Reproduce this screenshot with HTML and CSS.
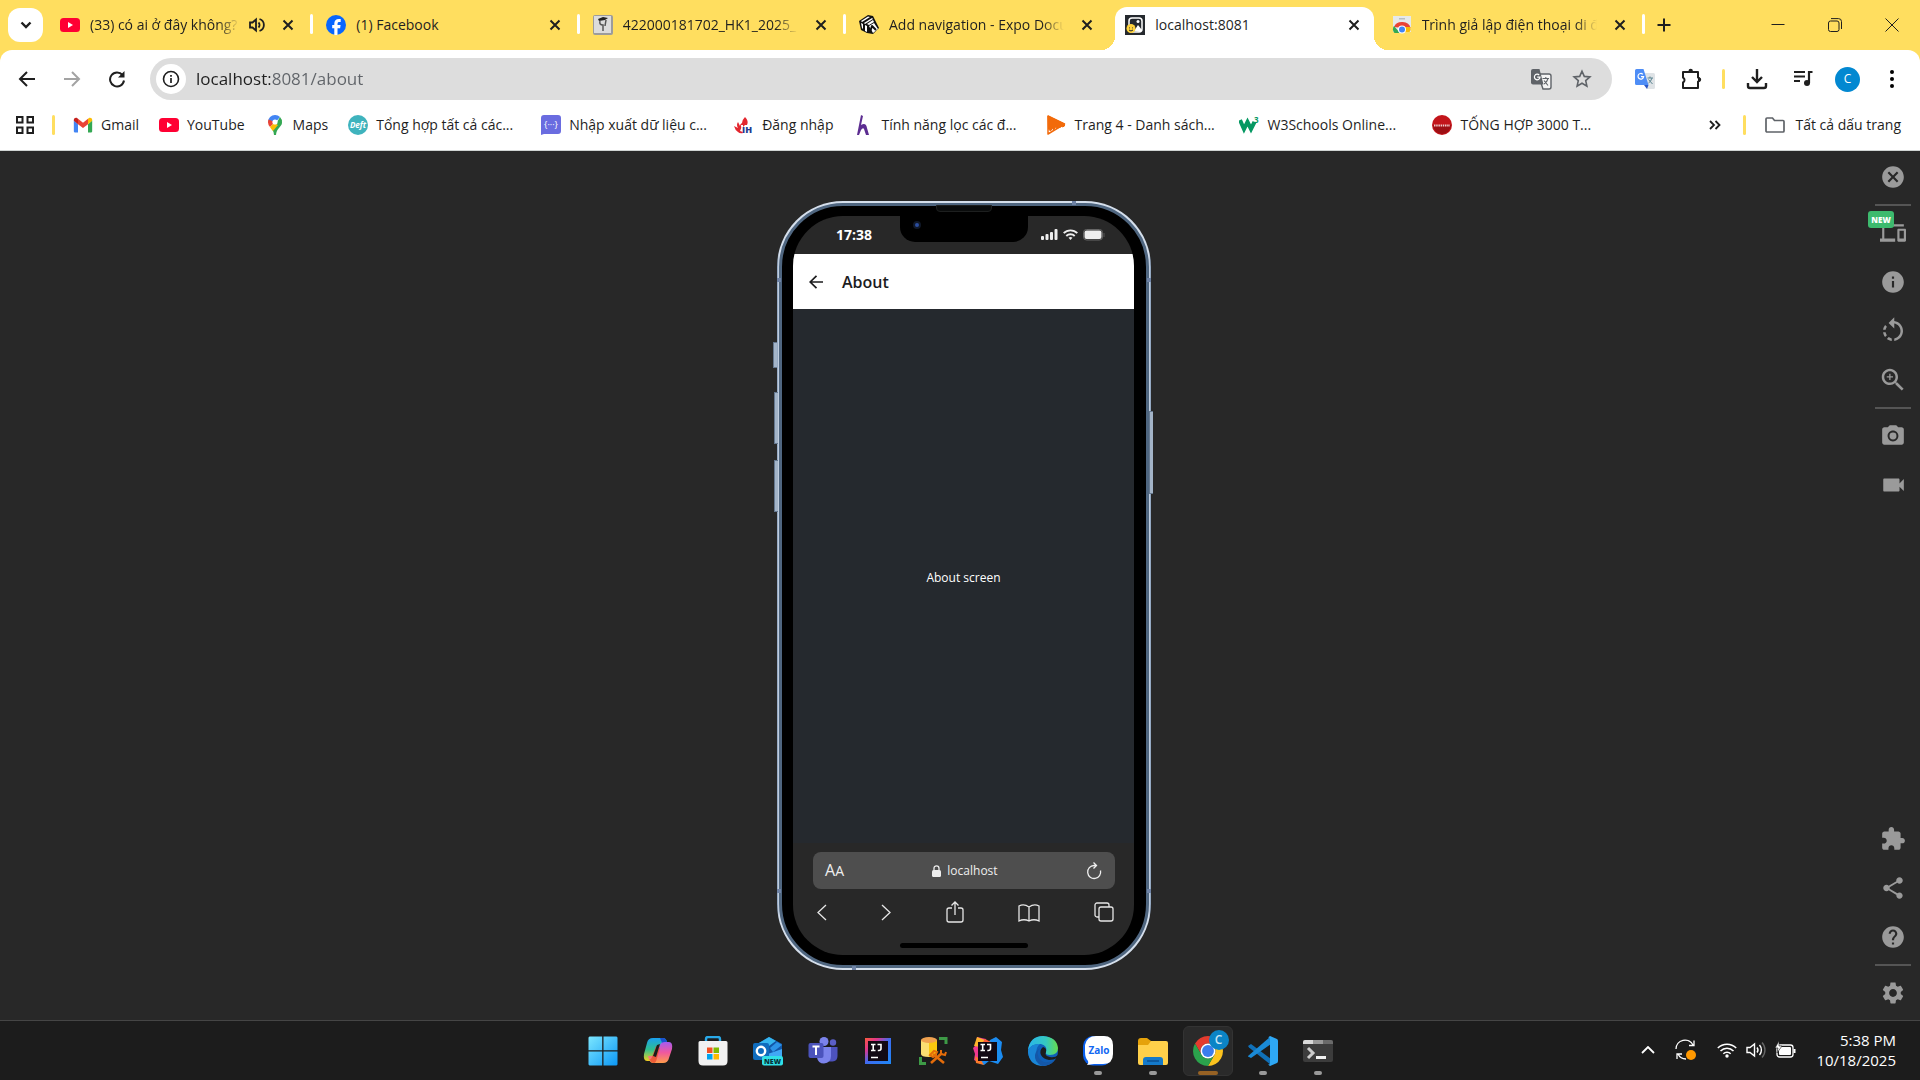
FILE: index.html
```html
<!DOCTYPE html>
<html lang="vi">
<head>
<meta charset="utf-8">
<meta name="viewport" content="width=device-width, initial-scale=1">
<title>localhost:8081</title>
<link rel="stylesheet" href="styles.css">
</head>
<body>
<header class="browser">
  <div class="tab-strip">
    <button class="tab-search" aria-label="Tìm kiếm thẻ"><svg width="12" height="12" viewBox="0 0 12 12"><path d="M1.500 3.500 6 8l4.500-4.500" fill="none" stroke="#1f1f1f" stroke-width="2.400"/></svg></button>
    <ul class="tabs">
      <li class="tab"><div class="tab-body">
        <svg class="favicon" viewBox="0 0 20 20"><rect y="3" width="20" height="14" rx="3.500" fill="#ff0033"/><path d="m8 7 5 3-5 3z" fill="#fff"/></svg>
        <span class="tab-title fade">(33) có ai ở đây không? - YouTube</span>
        <svg class="audio" width="16" height="16" viewBox="0 0 16 16" fill="none" stroke="#1f1f1f" stroke-width="1.800"><path d="M1 5.500h2.500L7 2.500v11L3.500 10.500H1z"/><path d="M9.500 5.500a3.500 3.500 0 0 1 0 5M10.500 2a6.300 6.300 0 0 1 0 12"/></svg>
        <button class="tab-close" aria-label="Đóng"><svg viewBox="0 0 12 12"><path d="m1.500 1.500 9 9m0-9-9 9"/></svg></button>
      </div></li>
      <li class="tab"><div class="tab-body">
        <svg class="favicon" viewBox="0 0 20 20"><circle cx="10" cy="10" r="10" fill="#0866ff"/><path d="M8.300 20v-6.800H6.200V10h2.100V8.700c0-3.300 1.500-4.800 4.700-4.800.6 0 1.300.1 1.700.2V7h-1.200c-1.500 0-2 .6-2 2.100V10h3.100l-.5 3.200h-2.600V20z" fill="#fff"/></svg>
        <span class="tab-title">(1) Facebook</span>
        <button class="tab-close" aria-label="Đóng"><svg viewBox="0 0 12 12"><path d="m1.500 1.500 9 9m0-9-9 9"/></svg></button>
      </div></li>
      <li class="tab"><div class="tab-body">
        <svg class="favicon" viewBox="0 0 20 20"><rect width="20" height="20" rx="2" fill="#9c9c9c"/><rect x="1" y="1" width="17" height="17" fill="#dcdcdc"/><path d="m5 4 5-2 5 1-3 2-6 1z" fill="#222"/><path d="M7 6q-1 4 3 4v6M13 5l-1 6" fill="none" stroke="#555" stroke-width="1.500"/></svg>
        <span class="tab-title fade">422000181702_HK1_2025_ - Google</span>
        <button class="tab-close" aria-label="Đóng"><svg viewBox="0 0 12 12"><path d="m1.500 1.500 9 9m0-9-9 9"/></svg></button>
      </div></li>
      <li class="tab"><div class="tab-body">
        <svg class="favicon" viewBox="0 0 20 20" stroke-linejoin="round"><path d="m0 6 9-6 5 1 2 4 4 8-6 6-6-1-6-3z" fill="#111"/><path d="m2 6 7-4.500L11 2 3 7zM5 8l8-5 1 1-8 5zM8 9l6-4 1 2-5 3z" fill="#fff"/><path d="m2 8 1 5 1 1V9zM6 10v6l2 1V11z" fill="#fff"/><path d="m10 11 5-3 4 6-5 4z" fill="#fff"/><path d="m11 17 2-6 4 4" fill="none" stroke="#111" stroke-width="2"/></svg>
        <span class="tab-title fade">Add navigation - Expo Documentation</span>
        <button class="tab-close" aria-label="Đóng"><svg viewBox="0 0 12 12"><path d="m1.500 1.500 9 9m0-9-9 9"/></svg></button>
      </div></li>
      <li class="tab active"><div class="tab-body">
        <svg class="favicon" viewBox="0 0 20 20"><rect width="20" height="20" fill="#25292e"/><rect x="4" y="3" width="13" height="14" rx="3" fill="#25292e" stroke="#fff" stroke-width="1.500"/><circle cx="13" cy="6.500" r="1.500" fill="#fff"/><path d="m9 16 4-6 4 5-2 2z" fill="#fff"/><circle cx="6" cy="13.500" r="4.500" fill="#ffd33d"/><path d="M4.500 12.500v.8m3-.8v.8M4 15q2 2 4 0" stroke="#25292e" fill="none"/></svg>
        <span class="tab-title">localhost:8081</span>
        <button class="tab-close" aria-label="Đóng"><svg viewBox="0 0 12 12"><path d="m1.500 1.500 9 9m0-9-9 9"/></svg></button>
      </div></li>
      <li class="tab"><div class="tab-body">
        <svg class="favicon" viewBox="0 0 20 20"><path d="M1 1h18v16H1z" fill="#e6e9ea"/><path d="M7 3h6v1.500H7z" fill="#b8bec2"/><path d="M2 12A8.500 7 0 0 1 18.500 13H10z" fill="#ea4335"/><path d="M2 11 8 18H2.500a9 7 0 0 1-.5-7z" fill="#34a853"/><path d="M10 12h8.500q.8 3-1 5h-6z" fill="#fbbc04"/><circle cx="10" cy="14.500" r="4" fill="#fff"/><circle cx="10" cy="14.500" r="3" fill="#4285f4"/></svg>
        <span class="tab-title fade">Trình giả lập điện thoại di động</span>
        <button class="tab-close" aria-label="Đóng"><svg viewBox="0 0 12 12"><path d="m1.500 1.500 9 9m0-9-9 9"/></svg></button>
      </div></li>
    </ul>
    <button class="new-tab" aria-label="Thẻ mới"><svg width="14" height="14" viewBox="0 0 14 14"><path d="M7 .5v13M.5 7h13" stroke="#1f1f1f" stroke-width="2"/></svg></button>
    <div class="window-controls">
      <button aria-label="Thu nhỏ"><svg width="14" height="14" viewBox="0 0 14 14"><path d="M.5 6.500h13"/></svg></button>
      <button aria-label="Khôi phục"><svg width="14" height="14" viewBox="0 0 14 14"><rect x=".5" y="3" width="10.500" height="10.500" rx="2"/><path d="M3 .6h7.500a3 3 0 0 1 3 3V11"/></svg></button>
      <button aria-label="Đóng cửa sổ"><svg width="14" height="14" viewBox="0 0 14 14"><path d="m.5.5 13 13m0-13-13 13"/></svg></button>
    </div>
  </div>

  <div class="chrome-body">
    <div class="toolbar">
      <div class="nav-buttons">
        <button aria-label="Quay lại"><svg width="18" height="18" viewBox="0 0 18 18"><path d="M17 9H2M9 2 2 9l7 7" fill="none" stroke="#1f1f1f" stroke-width="2"/></svg></button>
        <button aria-label="Tiến"><svg width="18" height="18" viewBox="0 0 18 18"><path d="M1 9h15M9 2l7 7-7 7" fill="none" stroke="#a3a3a3" stroke-width="2"/></svg></button>
        <button aria-label="Tải lại"><svg width="18" height="18" viewBox="0 0 18 18"><path d="M14.500 5A7 7 0 1 0 16 10.500" fill="none" stroke="#1f1f1f" stroke-width="2"/><path d="M16.500 1v6.500H10z" fill="#1f1f1f"/></svg></button>
      </div>
      <div class="omnibox">
        <button class="site-info" aria-label="Thông tin trang web"><svg width="18" height="18" viewBox="0 0 18 18"><circle cx="9" cy="9" r="7.500" fill="none" stroke="#1f1f1f" stroke-width="1.600"/><path d="M9 8v5M9 5v1.700" stroke="#1f1f1f" stroke-width="1.700"/></svg></button>
        <input class="address" type="text" aria-label="Thanh địa chỉ" value="localhost:8081/about">
        <button aria-label="Dịch trang này"><svg width="22" height="22" viewBox="0 0 22 22"><path d="M8 6h11a2 2 0 0 1 2 2v11a2 2 0 0 1-2 2h-6z" fill="#f5f5f5" stroke="#5f6368" stroke-width="1.400"/><path d="M3 1h6.500l4 15.500H3a2 2 0 0 1-2-2V3a2 2 0 0 1 2-2z" fill="#5f6368"/><path d="M9.200 7A2.800 2.800 0 1 0 10 9.200H7.200" fill="none" stroke="#fff" stroke-width="1.200"/><path d="M12.500 10.500H19M15.800 9v1.500M18 10.500q-1 4-4 5.500M14 12.500l4 5" fill="none" stroke="#5f6368" stroke-width="1.100"/></svg></button>
        <button aria-label="Đánh dấu thẻ này"><svg width="20" height="20" viewBox="0 0 20 20"><path d="m10 2.200 2.300 5.200 5.600.5-4.200 3.700 1.200 5.500-4.900-2.900-4.900 2.900 1.200-5.500-4.200-3.700 5.600-.5z" fill="none" stroke="#5f6368" stroke-width="1.600"/></svg></button>
      </div>
      <div class="actions">
        <button aria-label="Google Dịch"><svg width="20" height="20" viewBox="0 0 20 20"><path d="M8 4h10.500A1.500 1.500 0 0 1 20 5.500v13a1.500 1.500 0 0 1-1.500 1.500H12z" fill="#dfe3e6"/><path d="M1.500 0h7l5 16h-12A1.500 1.500 0 0 1 0 14.500v-13A1.500 1.500 0 0 1 1.500 0z" fill="#4e8df6"/><path d="m9 16h4.500L12 20z" fill="#2a56c6"/><path d="M7.800 5.300A2.800 2.800 0 1 0 8.600 7.600H6" fill="none" stroke="#fff" stroke-width="1.200"/><path d="M12.500 9H18M15 7.500V9m2 0q-1 3.500-3.500 5M13.500 10.500l4 4.500" fill="none" stroke="#5c8592"/></svg></button>
        <button aria-label="Tiện ích"><svg width="22" height="22" viewBox="0 0 22 22"><path d="M3 4h15v5.500a2.200 2.200 0 0 1 0 4.200V20H3v-5.500a2.800 2.800 0 0 0 0-5z" fill="none" stroke="#1f1f1f" stroke-width="2" stroke-linejoin="round"/><path d="M8.500 4V3a2.200 2.200 0 0 1 4.400 0v1M18 9.400h1a2.200 2.200 0 0 1 0 4.400h-1z" fill="#1f1f1f"/></svg></button>
        <span class="bar-divider"></span>
        <button aria-label="Tệp đã tải xuống"><svg width="22" height="22" viewBox="0 0 22 22"><path d="M11 1v13M6 9l5 5 5-5M2 15v3a2 2 0 0 0 2 2h14a2 2 0 0 0 2-2v-3" fill="none" stroke="#1f1f1f" stroke-width="2.400"/></svg></button>
        <button aria-label="Điều khiển nội dung nghe nhìn"><svg width="20" height="18" viewBox="0 0 20 18"><path d="M1 2h11M1 6.500h11M1 11h6" stroke="#1f1f1f" stroke-width="2"/><path d="M16 13V2h3.500" stroke="#1f1f1f" stroke-width="2.200" fill="none"/><circle cx="14" cy="13" r="3" fill="#1f1f1f"/></svg></button>
        <button class="avatar" aria-label="Hồ sơ">C</button>
        <button aria-label="Menu"><svg width="4" height="18" viewBox="0 0 4 18"><circle cx="2" cy="2" r="2"/><circle cx="2" cy="9" r="2"/><circle cx="2" cy="16" r="2"/></svg></button>
      </div>
    </div>

    <nav class="bookmarks">
      <button class="apps" aria-label="Nhóm thẻ"><svg width="18" height="18" viewBox="0 0 18 18" fill="none" stroke="#1f1f1f" stroke-width="2"><path d="M1 1h5.500v5.500H1zM11.500 1H17v5.500h-5.500zM1 11.500h5.500V17H1zM11.500 11.500H17V17h-5.500z"/></svg></button>
      <span class="bar-divider"></span>
      <div class="bookmark-list">
        <a href="#"><svg viewBox="0 0 24 24"><path d="M1 6.500v13c0 .8.600 1.500 1.500 1.500H6V11z" fill="#4285f4"/><path d="M23 6.500v13c0 .8-.6 1.500-1.500 1.500H18V11z" fill="#34a853"/><path d="M6 11V4.500l6 4.700 6-4.700V11l-6 4.700z" fill="#ea4335"/><path d="M1 7V6c0-2.500 2.500-3.500 4.200-2.200L6 4.500V11z" fill="#c5221f"/><path d="M23 7V6c0-2.500-2.500-3.500-4.200-2.200L18 4.500V11z" fill="#fbbc04"/></svg><span>Gmail</span></a>
        <a href="#"><svg viewBox="0 0 20 20"><rect y="3" width="20" height="14" rx="3.500" fill="#ff0033"/><path d="m8 7 5 3-5 3z" fill="#fff"/></svg><span>YouTube</span></a>
        <a href="#"><svg viewBox="0 0 20 20"><path d="M3 7a7 7 0 0 1 7-7v7z" fill="#4285f4"/><path d="M3.500 4.500 10 7l-5 5Q3 9.500 3 7.500 3 6 3.500 4.500z" fill="#ea4335"/><path d="M10 0a7 7 0 0 1 5 2L9 9z" fill="#4285f4"/><path d="M15 2q2.500 2.500 2 6c-.5 4-5.500 5-6 12H9q0-3-1.500-5z" fill="#34a853"/><path d="m5 12 4-4 4 2-5 6q-2-2-3-4z" fill="#fbbc04"/><circle cx="10" cy="7" r="2.600" fill="#fff"/></svg><span>Maps</span></a>
        <a href="#" class="long"><svg viewBox="0 0 20 20"><circle cx="10" cy="10" r="10" fill="#3fb3bd"/><text x="10" y="13" text-anchor="middle" font-size="8" font-weight="700" font-style="italic" fill="#fff">Deft</text></svg><span>Tổng hợp tất cả các...</span></a>
        <a href="#" class="long"><svg viewBox="0 0 20 20"><path d="M3 0h14a3 3 0 0 1 3 3v13a3 3 0 0 1-3 3H3l-3 1V3a3 3 0 0 1 3-3z" fill="#6a6ce0"/><text x="10" y="13" text-anchor="middle" font-size="9" fill="#fff">{···}</text></svg><span>Nhập xuất dữ liệu c...</span></a>
        <a href="#"><svg viewBox="0 0 20 20"><path d="M11 2q4 4 2 8h-2l-3 3 1 5q-3 1-5-1Q1 15 0 11l4 2q-2-3 0-6l2 4q0-2 2-3 0-3 3-6z" fill="#e3262e"/><path d="M7 10q1 3-1 6l3 1V10z" fill="#fff"/><text x="8" y="18" font-size="9" font-weight="800" fill="#253a8e">IH</text></svg><span>Đăng nhập</span></a>
        <a href="#" class="long"><svg viewBox="0 0 20 20"><path d="m8 0 2 1-2 9q5-3 6 3l2 7h-3l-2-6q-1-2-3 1l-2 5H4z" fill="#5c2d91"/></svg><span>Tính năng lọc các đ...</span></a>
        <a href="#" class="long"><svg viewBox="0 0 20 20"><path d="M2 1 18.500 9 2 19z" fill="#fff" stroke="#f26a0a" stroke-width="1.500" stroke-linejoin="round"/><path d="M2 1 18.500 9v2l-2 1-1-1-2 2-1-2-1 3-2-2-2 3-1-2-2 3-2-2z" fill="#f26a0a" stroke="#f26a0a" stroke-linejoin="round"/></svg><span>Trang 4 - Danh sách...</span></a>
        <a href="#" class="long"><svg viewBox="0 0 20 20"><path d="m1 5 4 9 3.500-7 3.500 7 3.500-7" fill="none" stroke="#059862" stroke-width="4"/><text x="15" y="8" font-size="8" font-weight="700" fill="#059862">3</text></svg><span>W3Schools Online...</span></a>
        <a href="#" class="long"><svg viewBox="0 0 20 20"><circle cx="10" cy="10" r="10" fill="#c3151b"/><path d="M1 10a9 9 0 0 0 18 0z" fill="#9d0f14"/><path d="M2 10.500h16" stroke="#f3c9c9" stroke-width="2" stroke-dasharray="1.500 .7"/></svg><span>TỔNG HỢP 3000 T...</span></a>
      </div>
      <button class="more" aria-label="Dấu trang khác"><svg width="12" height="10" viewBox="0 0 12 10"><path d="m1 1 4 4-4 4M6.500 1l4 4-4 4" fill="none" stroke="#1f1f1f" stroke-width="1.800"/></svg></button>
      <span class="bar-divider"></span>
      <a href="#" class="all-bookmarks"><svg viewBox="0 0 20 20"><path d="M1 4a1 1 0 0 1 1-1h5.500l2 2.500H18a1 1 0 0 1 1 1V16a1 1 0 0 1-1 1H2a1 1 0 0 1-1-1z" fill="none" stroke="#5f6368" stroke-width="1.700"/></svg><span>Tất cả dấu trang</span></a>
    </nav>
  </div>
</header>

<main class="simulator">
  <section class="stage">
    <div class="phone">
      <i class="side-key mute"></i><i class="side-key volume-up"></i><i class="side-key volume-down"></i><i class="side-key power"></i>
      <i class="antenna top"></i><i class="antenna left-top"></i><i class="antenna right-top"></i><i class="antenna left-bottom"></i><i class="antenna right-bottom"></i><i class="antenna bottom"></i>
      <i class="earpiece"></i>
      <div class="bezel">
        <div class="screen">
          <div class="status-bar">
            <time>17:38</time>
            <div class="notch"><i class="lens"></i></div>
            <div class="status-icons">
              <svg width="17" height="12" viewBox="0 0 17 12" fill="#eee"><rect y="7" width="3" height="4" rx="1"/><rect x="4.500" y="5" width="3" height="6" rx="1"/><rect x="9" y="3" width="3" height="8" rx="1"/><rect x="13.500" width="3" height="11" rx="1"/></svg>
              <svg width="15" height="12" viewBox="0 0 15 12" fill="none" stroke="#eee" stroke-width="1.900"><path d="M.7 4.200a9.500 9.500 0 0 1 13.600 0M3.300 7a6 6 0 0 1 8.400 0"/><path d="m7.500 11-2-2.200a3 3 0 0 1 4 0z" fill="#eee" stroke="none"/></svg>
              <svg width="22" height="12" viewBox="0 0 22 12"><rect x=".5" y=".5" width="19" height="10.500" rx="3" fill="none" stroke="#666"/><rect x="1.500" y="1.500" width="17" height="8.500" rx="2" fill="#eee"/><path d="M21 4v4" stroke="#555"/></svg>
            </div>
          </div>
          <div class="app-header">
            <button aria-label="Back"><svg width="14" height="14" viewBox="0 0 14 14"><path d="M14 7H1M7.500.8 1.200 7l6.300 6.200" fill="none" stroke="#1c1c1e" stroke-width="1.700"/></svg></button>
            <h1>About</h1>
          </div>
          <div class="app-content"><p>About screen</p></div>
          <div class="safari">
            <div class="safari-address">
              <button class="text-size" aria-label="Text size">A<small>A</small></button>
              <span class="host"><svg width="9" height="12" viewBox="0 0 9 12"><rect y="5" width="9" height="7" rx="1.500" fill="#eee"/><path d="M2 5.500V3.300a2.500 2.500 0 0 1 5 0v2.200" fill="none" stroke="#eee" stroke-width="1.300"/></svg>localhost</span>
              <button aria-label="Reload"><svg width="16" height="18" viewBox="0 0 16 18" fill="none" stroke="#eee" stroke-width="1.300"><path d="M14.500 8.500A6.500 6.500 0 1 1 8 3.500h2.500M7.500.5l3 3-3 3"/></svg></button>
            </div>
            <div class="safari-tools">
              <button aria-label="Back"><svg width="10" height="22" viewBox="0 0 10 22"><path d="m9 4-8 7.500L9 19"/></svg></button>
              <button aria-label="Forward"><svg width="10" height="22" viewBox="0 0 10 22"><path d="m1 4 8 7.500L1 19"/></svg></button>
              <button aria-label="Share"><svg width="18" height="22" viewBox="0 0 18 22"><path d="M6 7H3a2 2 0 0 0-2 2v10a2 2 0 0 0 2 2h12a2 2 0 0 0 2-2V9a2 2 0 0 0-2-2h-3M9 14V1M5.500 4.500 9 1l3.500 3.500"/></svg></button>
              <button aria-label="Bookmarks"><svg width="22" height="22" viewBox="0 0 22 22"><path d="M11 6Q6 2.500 1 5v15q5-2.500 10 0 5-2.500 10 0V5q-5-2.500-10 1zv14"/></svg></button>
              <button aria-label="Tabs"><svg width="20" height="22" viewBox="0 0 20 22"><rect x="5" y="6" width="14" height="14" rx="2"/><path d="M5 16H3a2 2 0 0 1-2-2V4a2 2 0 0 1 2-2h10a2 2 0 0 1 2 2v2"/></svg></button>
            </div>
            <i class="home-indicator"></i>
          </div>
        </div>
      </div>
    </div>
  </section>

  <aside class="tools">
    <div class="tool-group">
      <button aria-label="Close"><svg viewBox="0 0 24 24"><path d="M12 2C6.470 2 2 6.470 2 12s4.470 10 10 10 10-4.470 10-10S17.530 2 12 2zm5 13.590L15.590 17 12 13.410 8.410 17 7 15.590 10.590 12 7 8.410 8.410 7 12 10.590 15.590 7 17 8.410 13.410 12 17 15.590z"/></svg></button>
      <hr>
      <button aria-label="Devices"><svg viewBox="0 0 24 24"><path d="M4 6h18V4H4c-1.100 0-2 .9-2 2v11H0v3h14v-3H4V6zm19 2h-6c-.55 0-1 .45-1 1v10c0 .55.45 1 1 1h6c.55 0 1-.45 1-1V9c0-.55-.45-1-1-1zm-1 9h-4v-7h4v7z"/></svg><span class="new-badge">NEW</span></button>
      <button aria-label="Info"><svg viewBox="0 0 24 24"><path d="M12 2C6.480 2 2 6.480 2 12s4.480 10 10 10 10-4.480 10-10S17.520 2 12 2zm1 15h-2v-6h2v6zm0-8h-2V7h2v2z"/></svg></button>
      <button class="large" aria-label="Rotate"><svg viewBox="0 0 24 24"><path d="M7.110 8.530L5.700 7.110C4.800 8.270 4.240 9.610 4.070 11h2.020c.14-.87.49-1.720 1.020-2.470zM6.090 13H4.070c.17 1.390.72 2.730 1.620 3.890l1.410-1.420c-.52-.75-.87-1.590-1.010-2.470zm1.010 5.320c1.160.9 2.510 1.440 3.900 1.610V17.900c-.87-.15-1.710-.49-2.460-1.030L7.100 18.320zM13 4.070V1L8.450 5.550 13 10V6.090c2.840.48 5 2.940 5 5.910s-2.160 5.430-5 5.910v2.020c3.950-.49 7-3.850 7-7.930s-3.050-7.440-7-7.930z"/></svg></button>
      <button class="large" aria-label="Zoom"><svg viewBox="0 0 24 24"><path d="M15.500 14h-.79l-.28-.27C15.410 12.590 16 11.110 16 9.500 16 5.910 13.090 3 9.500 3S3 5.910 3 9.500 5.910 16 9.500 16c1.610 0 3.090-.59 4.230-1.570l.27.28v.79l5 4.990L20.490 19l-4.990-5zm-6 0C7.010 14 5 11.990 5 9.500S7.010 5 9.500 5 14 7.010 14 9.500 11.990 14 9.500 14zM12 10h-2v2H9v-2H7V9h2V7h1v2h2v1z"/></svg></button>
      <hr>
      <button aria-label="Screenshot"><svg viewBox="0 0 24 24"><circle cx="12" cy="12" r="3.200"/><path d="M9 2L7.170 4H4c-1.100 0-2 .9-2 2v12c0 1.100.9 2 2 2h16c1.100 0 2-.9 2-2V6c0-1.100-.9-2-2-2h-3.170L15 2H9zm3 15c-2.760 0-5-2.240-5-5s2.240-5 5-5 5 2.240 5 5-2.240 5-5 5z"/></svg></button>
      <button aria-label="Record"><svg viewBox="0 0 24 24"><path d="M18 10.500V7c0-.55-.45-1-1-1H4c-.55 0-1 .45-1 1v10c0 .55.45 1 1 1h13c.55 0 1-.45 1-1v-3.500l4 4v-11l-4 4z"/></svg></button>
    </div>
    <div class="tool-group">
      <button aria-label="Extensions"><svg viewBox="0 0 24 24"><path d="M20.500 11H19V7c0-1.100-.9-2-2-2h-4V3.500C13 2.120 11.880 1 10.500 1S8 2.120 8 3.500V5H4c-1.100 0-1.990.9-1.990 2v3.800H3.500c1.490 0 2.700 1.210 2.700 2.700s-1.210 2.700-2.700 2.700H2V20c0 1.100.9 2 2 2h3.800v-1.500c0-1.490 1.210-2.700 2.700-2.700 1.490 0 2.700 1.210 2.700 2.700V22H17c1.100 0 2-.9 2-2v-4h1.500c1.380 0 2.500-1.120 2.500-2.500S21.880 11 20.500 11z"/></svg></button>
      <button aria-label="Share"><svg viewBox="0 0 24 24"><path d="M18 16.080c-.76 0-1.440.3-1.960.77L8.910 12.700c.05-.23.09-.46.09-.7s-.04-.47-.09-.7l7.050-4.110c.54.5 1.250.81 2.040.81 1.660 0 3-1.340 3-3s-1.340-3-3-3-3 1.340-3 3c0 .24.04.47.09.7L8.040 9.810C7.500 9.310 6.790 9 6 9c-1.660 0-3 1.340-3 3s1.340 3 3 3c.79 0 1.500-.31 2.040-.81l7.120 4.160c-.05.21-.08.43-.08.65 0 1.610 1.310 2.920 2.920 2.920 1.610 0 2.920-1.310 2.920-2.920s-1.310-2.920-2.920-2.920z"/></svg></button>
      <button aria-label="Help"><svg viewBox="0 0 24 24"><path d="M12 2C6.480 2 2 6.480 2 12s4.480 10 10 10 10-4.480 10-10S17.520 2 12 2zm1 17h-2v-2h2v2zm2.070-7.750l-.9.920C13.450 12.900 13 13.500 13 15h-2v-.5c0-1.100.45-2.100 1.170-2.830l1.240-1.260c.37-.36.59-.86.59-1.410 0-1.100-.9-2-2-2s-2 .9-2 2H8c0-2.210 1.790-4 4-4s4 1.790 4 4c0 .88-.36 1.680-.93 2.250z"/></svg></button>
      <hr>
      <button aria-label="Settings"><svg viewBox="0 0 24 24"><path d="M19.140 12.940c.04-.3.06-.61.06-.94 0-.32-.02-.64-.07-.94l2.030-1.580c.18-.14.23-.41.12-.61l-1.920-3.320c-.12-.22-.37-.29-.59-.22l-2.390.96c-.5-.38-1.030-.7-1.620-.94l-.36-2.540c-.04-.24-.24-.41-.48-.41h-3.840c-.24 0-.43.17-.47.41l-.36 2.540c-.59.24-1.130.57-1.620.94l-2.390-.96c-.22-.08-.47 0-.59.22L2.740 8.870c-.12.21-.08.47.12.61l2.030 1.580c-.05.3-.09.63-.09.94s.02.64.07.94l-2.030 1.580c-.18.14-.23.41-.12.61l1.920 3.320c.12.22.37.29.59.22l2.390-.96c.5.38 1.030.7 1.620.94l.36 2.540c.05.24.24.41.48.41h3.840c.24 0 .44-.17.47-.41l.36-2.540c.59-.24 1.130-.56 1.620-.94l2.390.96c.22.08.47 0 .59-.22l1.920-3.320c.12-.22.07-.47-.12-.61l-2.010-1.580zM12 15.600c-1.980 0-3.600-1.620-3.600-3.600s1.620-3.600 3.600-3.600 3.600 1.620 3.600 3.600-1.620 3.600-3.600 3.600z"/></svg></button>
    </div>
  </aside>
</main>

<footer class="taskbar">
  <div class="pinned">
    <button aria-label="Start"><svg viewBox="0 0 30 30"><defs><linearGradient id="win" gradientUnits="userSpaceOnUse" x1="0" y1="0" x2="30" y2="30"><stop stop-color="#7ee8ff"/><stop offset="1" stop-color="#0a96f5"/></linearGradient></defs><path d="M1.500.5h12.700v13.700H.5V1.500zM15.500.5h13l1 1v12.700h-14zM.5 15.500h13.700v14H1.500l-1-1zM15.500 15.500h14v13l-1 1h-13z" fill="url(#win)"/></svg></button>
    <button aria-label="Copilot"><svg viewBox="0 0 30 30"><defs><linearGradient id="co1" x1="0" y1="0" x2="0" y2="1"><stop stop-color="#1aa0f0"/><stop offset=".5" stop-color="#2fbf8f"/><stop offset="1" stop-color="#f2cf1f"/></linearGradient><linearGradient id="co2" x1="0" y1="0" x2="0" y2="1"><stop stop-color="#a55bf0"/><stop offset=".5" stop-color="#f0589e"/><stop offset="1" stop-color="#ff9c4a"/></linearGradient></defs><path d="M20 2q3 0 4 4l1 3h-5q-3 0-4 3l-3 9q-1 4-5 4H4q-4 0-3-7L4 7q1-5 6-5z" fill="url(#co1)"/><path d="M10 2h10q3 0 4 4l1 3h-5L17 2z" fill="#1a52cf"/><path d="M10 27q-3 0-4-4l-1-3h5q3 0 4-3l3-8q1-3 5-3h4q4 0 3 7l-3 9q-1 5-6 5z" fill="url(#co2)"/><path d="m13 10-4 11q-1 3-4 3h2q1 3 4 3 2 0 3-5l3-10z" fill="#e9502f" opacity=".8"/><path d="m14 9 3-1-4 13-3-1z" fill="#1c1c1c"/></svg></button>
    <button aria-label="Microsoft Store"><svg viewBox="0 0 30 30"><path d="M8 6V3a2 2 0 0 1 2-2h10a2 2 0 0 1 2 2v3" fill="none" stroke="#29a9e8" stroke-width="2.400"/><path d="M2 5h26a1.500 1.500 0 0 1 1.500 1.500V25q0 4.500-4.500 4.500H5Q.5 29.500.5 25V6.500A1.500 1.500 0 0 1 2 5z" fill="#f1f1f1"/><path d="M9 11.500h5.500V17H9z" fill="#f25022"/><path d="M15.500 11.500H21V17h-5.500z" fill="#7fba00"/><path d="M9 18h5.500v5.500H9z" fill="#00a4ef"/><path d="M15.500 18H21v5.500h-5.500z" fill="#ffb900"/></svg></button>
    <button aria-label="Outlook"><svg viewBox="0 0 30 30"><path d="m4 8 12-7 13 7v15H4z" fill="#1a6fc4"/><path d="m6 7 10-6 7 4-11 8z" fill="#35b5ee"/><path d="m12 13 11-8 6 4v5L17 22z" fill="#1257a8"/><path d="m17 12 7-6 5 3-9 7z" fill="#2c93e8"/><path d="M9 20 29 13v12H9z" fill="#41a8f5"/><rect y="7" width="16" height="17" rx="2" fill="#0f6cbd"/><circle cx="8" cy="15" r="4.200" fill="none" stroke="#fff" stroke-width="2.400"/><rect x="9" y="20" width="21" height="9.500" rx="2" fill="#2fe0e6"/><text x="19.500" y="27.500" text-anchor="middle" font-size="7" font-weight="800" fill="#06343a">NEW</text></svg></button>
    <button aria-label="Teams"><svg viewBox="0 0 30 30"><circle cx="25" cy="6.500" r="3.200" fill="#5b5fc7"/><path d="M19 11h10.500v9q0 5-5 5.500H19z" fill="#4d52bd"/><circle cx="16" cy="5.500" r="4.500" fill="#7b83eb"/><path d="M9 11h14v9q0 7-7 7.500-6 0-7-6z" fill="#7b83eb"/><rect x=".5" y="7" width="15" height="15" rx="2" fill="#4b53bc"/><path d="M4.500 10.500h7M8 10.500V19" stroke="#fff" stroke-width="2"/></svg></button>
    <button aria-label="IntelliJ IDEA"><svg viewBox="0 0 30 30"><defs><linearGradient id="ij" x1="0" y1="0" x2="1" y2="1"><stop stop-color="#fc5a3c"/><stop offset=".25" stop-color="#e0368c"/><stop offset=".5" stop-color="#3d6cf0"/><stop offset="1" stop-color="#1e88f5"/></linearGradient></defs><path d="M2 2h26v26H2z" fill="url(#ij)"/><path d="M5 5h20v20H5z" fill="#120914"/><path d="M8 8.500h4.500M8 14.500h4.500M10.200 8.500v6M14.500 8.500H18v4q0 2-2.200 2h-1M8 21.500h7" stroke="#fff" stroke-width="1.600" fill="none"/></svg></button>
    <button aria-label="SQL Server"><svg viewBox="0 0 30 30"><path d="M3 4v14q0 3 8 3t8-3V4z" fill="#fbdf72"/><path d="M11 6v15q8 0 8-3V4z" fill="#f9c80e"/><ellipse cx="11" cy="4" rx="8" ry="3" fill="#f0a250"/><path d="M21 2.500h7V8M2.500 21v6.500H8" fill="none" stroke="#3d9a46" stroke-width="3"/><path d="m13 27 11-10m-9 1 11 9" stroke="#e46c0a" stroke-width="2.600"/><path d="m12 19 4-4 3 1-2 4-2 1zM23 14v4l4 1 1-3" fill="none" stroke="#e46c0a" stroke-width="2"/></svg></button>
    <button aria-label="IntelliJ IDEA Ultimate"><svg viewBox="0 0 30 30"><path d="m4 1 9 2 3 14-9 10-6-3 1-6-2-6 3-3z" fill="#f0388f"/><path d="m4 1 8 3-5 7-6-1z" fill="#ffb32c"/><path d="m17 4 6-3 6 5-1 8 2 7-5 7-9-3-5 4-8-3 8-11z" fill="#1b8cf2"/><path d="m12 3 6 3-2 4-8-1z" fill="#ff5a36"/><path d="M2 20 8 24l3 5-8-2z" fill="#fb7a2b"/><path d="M5 6h19v19H5z" fill="#120914"/><path d="M7.500 8.500H12M7.500 14.500H12M9.700 8.500v6M14 8.500h3.500v4q0 2-2.200 2h-1M8 21.500h7" stroke="#fff" stroke-width="1.600" fill="none"/></svg></button>
    <button aria-label="Edge"><svg viewBox="0 0 30 30"><defs><linearGradient id="ed" x1="0" y1="0" x2="1" y2="0"><stop stop-color="#29b6ea"/><stop offset=".6" stop-color="#35c9c0"/><stop offset="1" stop-color="#66dc4c"/></linearGradient></defs><circle cx="15" cy="15" r="15" fill="#0f5fb8"/><path d="M0 14Q2 0 15 0q14 1 15 12 0 7-8 7-5 0-4-3 2-6-5-8Q4 7 0 14z" fill="url(#ed)"/><path d="M0 14q4-7 12-6-5 4-3 11 2 7 9 10.500-16 2-18-13z" fill="#1a86d6"/><path d="M30 19q-3 3-8 2-6-1-4-5 1-4-3-5-4 3-2 8 2 4 8 5 5 0 8-2z" fill="#1c1c1c"/><path d="M12 12q-4 4-1 10 3 5 9 4 4 0 7-2-5 6-13 6-8-4-7-11 1-5 5-7z" fill="#1457a8"/></svg></button>
    <button class="running" aria-label="Zalo"><svg viewBox="0 0 30 30"><rect width="29" height="29.500" rx="10" fill="#0a60f0"/><path d="M13 0h8q9 0 9 9v9q0 10-10 10h-9L4 29q2-2 1-4-3-3-3-9V9q2-9 11-9z" fill="#fff"/><text x="16" y="17.500" text-anchor="middle" font-size="10" font-weight="700" fill="#1268f2">Zalo</text></svg></button>
    <button class="running" aria-label="File Explorer"><svg viewBox="0 0 30 30"><path d="M0 5q0-3 3-3h6l4 3v9H0z" fill="#e5a20a"/><path d="M0 9h10l3-4h15q2 0 2 2v20q0 2-2 2H2q-2 0-2-2z" fill="#ffd04a"/><path d="M5 29v-5q0-3 3-3h14q3 0 3 3v5z" fill="#1479c9"/><path d="M9 25h12" stroke="#0a4f90" stroke-width="1.500"/></svg></button>
    <button class="running current" aria-label="Chrome"><svg viewBox="0 0 48 48"><path d="M3.220 12A24 24 0 0 1 44.780 12H24A12 12 0 0 0 13.610 30z" fill="#e33b2e"/><path d="M44.780 12A24 24 0 0 1 24 48L34.390 30A12 12 0 0 0 24 12z" fill="#fcc31e"/><path d="M24 48A24 24 0 0 1 3.220 12L13.610 30A12 12 0 0 0 34.390 30z" fill="#2ba24c"/><circle cx="24" cy="24" r="12" fill="#fff"/><circle cx="24" cy="24" r="9.500" fill="#3b7ded"/></svg><span class="profile-badge">C</span></button>
    <button class="running" aria-label="Visual Studio Code"><svg viewBox="0 0 30 30"><path d="m0 10 3-2 20 15v6L1 11.500z" fill="#1070b8"/><path d="m0 20 22-19 1 7L3 22l-3-1.500z" fill="#1a8ad6"/><path d="m22 0 7 3q1 .5 1 2v20q0 1.500-1 2l-7 3-2-1.500q2 .5 2-1.500V3q0-2-2-1.500z" fill="#2ea8f5"/></svg></button>
    <button class="running" aria-label="Terminal"><svg viewBox="0 0 30 30"><rect y="4" width="30" height="22" rx="2" fill="#3c3c3c"/><path d="M0 8V6q0-2 2-2h8v4z" fill="#d9d9d9"/><path d="M10 4h10v4H10z" fill="#9a9a9a"/><path d="M20 4h8q2 0 2 2v2H20z" fill="#6a6a6a"/><path d="m5 12 5 5-5 5" fill="none" stroke="#ccc" stroke-width="3"/><path d="M13 21.500h10" stroke="#f2f2f2" stroke-width="3"/></svg></button>
  </div>
  <div class="tray">
    <button aria-label="Hidden icons"><svg width="14" height="8" viewBox="0 0 14 8"><path d="m1 7 6-6 6 6" fill="none" stroke="#fff" stroke-width="1.800"/></svg></button>
    <button aria-label="Updates"><svg width="22" height="22" viewBox="0 0 22 22"><path d="M1 10a9 9 0 0 1 17-4M14 6.500h5v-5M11 20a9 9 0 0 1-8-5M2 20v-5h5" fill="none" stroke="#fff" stroke-width="1.300"/><circle cx="16" cy="16" r="5" fill="#ff9800"/></svg></button>
    <button class="system" aria-label="Network, volume, battery">
      <svg width="20" height="16" viewBox="0 0 20 16" fill="none" stroke="#fff" stroke-width="1.500"><path d="M.8 6a13 13 0 0 1 18.400 0M3.500 9a9 9 0 0 1 13 0M6.300 11.700a5.200 5.200 0 0 1 7.400 0"/><circle cx="10" cy="14" r="1.700" fill="#fff" stroke="none"/></svg>
      <svg width="20" height="18" viewBox="0 0 20 18" fill="none" stroke="#fff" stroke-width="1.400"><path d="M1 6.500h3L8.500 3v12L4 11.500H1z"/><path d="M11 6.500a4 4 0 0 1 0 5M13.500 4a7.500 7.500 0 0 1 0 10"/><path d="M16 1.500a11 11 0 0 1 0 15" stroke="#666"/></svg>
      <svg width="21" height="18" viewBox="0 0 21 18"><rect x="2" y="4" width="16" height="12" rx="2.500" fill="none" stroke="#fff" stroke-width="1.300"/><rect x="4" y="6" width="12" height="8" rx="1" fill="#fff"/><path d="M19.500 8v4" stroke="#fff" stroke-width="2"/><path d="M4 0 0 7h3l-1 5 5-7H4z" fill="#fff" stroke="#1c1c1c" stroke-width=".6"/></svg>
    </button>
    <div class="clock"><time>5:38 PM</time><time>10/18/2025</time></div>
  </div>
</footer>
</body>
</html>
```
FILE: styles.css
```css
* { box-sizing: border-box; }

body {
  margin: 0;
  min-height: 100vh;
  display: flex;
  flex-direction: column;
  background: #282828;
  color: #1f1f1f;
  font-family: "Open Sans", "Noto Sans", sans-serif;
  font-size: 14px;
  line-height: 20px;
}

button {
  display: flex;
  align-items: center;
  justify-content: center;
  padding: 0;
  border: 0;
  background: none;
  color: inherit;
  font: inherit;
}

a { color: inherit; text-decoration: none; }
svg { display: block; flex: none; }

/* Tab strip */
.browser { background: #ffde5f; }
.tab-strip { display: flex; height: 50px; }
.tab-search {
  flex: none;
  width: 35px;
  height: 34px;
  margin: 8px 3px 0 8px;
  border-radius: 12px;
  background: #fff;
}
.tabs {
  display: flex;
  flex: 0 1 1598px;
  min-width: 0;
  margin: 0;
  padding: 7px 0 0;
  list-style: none;
}
.tab { position: relative; flex: 1; min-width: 0; padding: 0 4px; }
.tab-body {
  position: relative;
  display: flex;
  align-items: center;
  height: 43px;
  padding: 0 14px 7px 10px;
}
.favicon { width: 20px; height: 20px; margin-right: 10px; }
.tab-title { flex: 1; min-width: 0; overflow: hidden; white-space: nowrap; }
.fade { mask-image: linear-gradient(90deg, #000 calc(100% - 22px), transparent); }
.audio { margin-left: 9px; }
.tab-close { width: 12px; height: 12px; margin-left: 17px; }
.tab-close svg { width: 12px; height: 12px; stroke: #1f1f1f; stroke-width: 2; }
.tab::after {
  content: "";
  position: absolute;
  top: 7px;
  right: -1px;
  width: 3px;
  height: 20px;
  border-radius: 2px;
  background: #fff;
}
.tab:nth-child(4)::after, .active::after { display: none; }
.active .tab-body { border-radius: 12px 12px 0 0; background: #fff; }
.active .tab-body::before, .active .tab-body::after {
  content: "";
  position: absolute;
  bottom: 0;
  width: 14px;
  height: 14px;
}
.active .tab-body::before { left: -14px; background: radial-gradient(circle at 0 0, transparent 14px, #fff 14px); }
.active .tab-body::after { right: -14px; background: radial-gradient(circle at 100% 0, transparent 14px, #fff 14px); }
.new-tab { flex: none; width: 40px; }
.window-controls { display: flex; flex: none; margin-left: auto; }
.window-controls button { width: 57px; }
.window-controls svg { fill: none; stroke: #1f1f1f; stroke-width: 1; }

/* Toolbar */
.chrome-body {
  border-bottom: 1px solid #cfd4d2;
  border-radius: 12px 12px 0 0;
  background: #fff;
}
.toolbar { display: flex; align-items: center; padding: 8px 5px 0 4px; }
.nav-buttons { display: flex; margin-right: 11px; }
.nav-buttons button { width: 45px; height: 40px; }
.omnibox {
  display: flex;
  flex: 1;
  align-items: center;
  height: 42px;
  padding: 0 20px 0 6px;
  gap: 20px;
  border-radius: 21px;
  background: #ddd;
}
.site-info { width: 30px; height: 30px; margin-right: -10px; border-radius: 50%; background: #fff; }
.address {
  flex: 1;
  min-width: 0;
  padding: 0;
  border: 0;
  outline: 0;
  font: inherit;
  font-size: 17px;
  line-height: 24px;
  background: linear-gradient(90deg, #1f1f1f 74px, #5f6368 74px);
  background-clip: text;
  color: transparent;
}
.actions { display: flex; align-items: center; margin-left: 10px; }
.actions button { width: 46px; height: 40px; }
.actions .bar-divider { margin: 0 9px 0 8px; }
.bar-divider { flex: none; width: 3px; height: 20px; border-radius: 2px; background: #ffde5f; }
.actions .avatar {
  width: 25px;
  height: 25px;
  margin: 0 9px;
  border-radius: 50%;
  background: #0288d1;
  color: #fff;
  font-size: 12px;
}

/* Bookmarks */
.bookmarks { display: flex; align-items: center; height: 50px; padding: 0 19px 0 16px; }
.apps { margin-right: 18px; }
.bookmark-list { display: flex; flex: 1; min-width: 0; gap: 20px; margin-left: 18px; overflow: hidden; }
.bookmark-list a, .all-bookmarks { display: flex; flex: none; align-items: center; gap: 8px; white-space: nowrap; }
.bookmarks a svg { width: 20px; height: 20px; }
.long span { width: 145px; }
.more { margin-right: 22px; }
.all-bookmarks { margin-left: 19px; gap: 11px; }

/* Simulator */
.simulator { display: flex; flex: 1; }
.stage { display: flex; flex: 1; align-items: center; justify-content: center; padding-left: 62px; }
.phone {
  position: relative;
  width: 374px;
  padding: 2px;
  border-radius: 66px;
  background: linear-gradient(90deg, #7f97b5, #d5dfec 2px, #d5dfec calc(100% - 2px), #7f97b5);
}
.bezel {
  padding: 10px 12px 10px 11px;
  border: 3px solid #4f6680;
  border-radius: 64px;
  background: #000;
}
.screen {
  display: flex;
  flex-direction: column;
  min-height: 739px;
  border-radius: 50px;
  background: #282828;
  color: #eee;
  overflow: hidden;
}
.side-key { position: absolute; width: 4px; border: 1px solid #65788f; border-right: 0; background: #a3b4c8; }
.mute { left: -4px; top: 141px; height: 26px; }
.volume-up { left: -3px; top: 191px; height: 52px; }
.volume-down { left: -3px; top: 259px; height: 52px; }
.power { right: -2px; top: 210px; height: 83px; }
.antenna { position: absolute; width: 4px; height: 4px; background: #6f83a6; }
.antenna.top { top: 0; right: 75px; }
.antenna.left-top { left: 0; top: 77px; }
.antenna.right-top { right: 0; top: 77px; }
.antenna.left-bottom { left: 0; bottom: 77px; }
.antenna.right-bottom { right: 0; bottom: 77px; }
.antenna.bottom { bottom: 0; left: 75px; }
.earpiece {
  position: absolute;
  top: 4px;
  left: 50%;
  width: 56px;
  height: 7px;
  margin-left: -28px;
  border: 1px solid #1d1f1f;
  border-radius: 0 0 4px 4px;
  background: #0a0c0c;
}
.status-bar { display: grid; grid-template-columns: 1fr 128px 1fr; height: 38px; }
.status-bar > time { padding: 9px 0 0 43px; color: #fff; font-weight: 700; }
.notch { height: 26px; padding: 5px 13px; border-radius: 0 0 15px 15px; background: #000; }
.lens { display: block; width: 8px; height: 8px; border: 2px solid #101828; border-radius: 50%; background: #2c4ea0; }
.status-icons { display: flex; gap: 5px; padding: 13px 0 0 13px; }
.app-header { display: flex; align-items: center; height: 55px; padding-left: 16px; gap: 19px; background: #fff; color: #1c1c1e; }
.app-header h1 { margin: 0; font-size: 16px; line-height: 24px; font-weight: 600; }
.app-content { display: flex; flex: 1; align-items: center; justify-content: center; padding-top: 3px; background: #25292e; color: #fff; font-size: 12px; }
.app-content p { margin: 0; }
.safari { display: flex; flex-direction: column; padding: 9px 19px 7px 20px; }
.safari-address {
  display: flex;
  align-items: center;
  justify-content: space-between;
  height: 37px;
  padding: 0 13px 0 12px;
  border-radius: 8px;
  background: #4e4e4e;
}
.text-size { align-items: baseline; font-size: 16px; }
.text-size small { font-size: 14px; }
.host { display: flex; align-items: center; gap: 6px; font-size: 12px; }
.safari-tools { display: flex; justify-content: space-between; padding: 12px 1px 0 4px; }
.safari-tools svg { fill: none; stroke: #e6e6e6; stroke-width: 1.3; }
.home-indicator { align-self: center; width: 128px; height: 5px; margin-top: 20px; border-radius: 3px; background: #000; }

/* Side tools */
.tools { display: flex; flex: none; flex-direction: column; justify-content: space-between; width: 54px; padding: 1px 0 3px; }
.tools button { position: relative; width: 54px; height: 49px; }
.tools svg { width: 26px; height: 26px; fill: #9a9a9a; }
.tools .large svg { width: 30px; height: 30px; }
.tools hr { width: 36px; height: 2px; margin: 3px auto 2px; border: 0; background: #555; }
.new-badge {
  position: absolute;
  top: 3px;
  left: 2px;
  width: 26px;
  height: 17px;
  border-radius: 3px;
  background: #3dba6e;
  color: #fff;
  font-size: 8px;
  line-height: 17px;
  font-weight: 800;
}

/* Taskbar */
.taskbar {
  display: grid;
  grid-template-columns: 1fr auto 1fr;
  height: 60px;
  border-top: 1px solid #454545;
  background: #1c1c1c;
  color: #fff;
}
.pinned { display: flex; grid-column: 2; align-items: center; gap: 5px; }
.pinned button { position: relative; width: 50px; height: 50px; border-radius: 6px; }
.pinned svg { width: 30px; height: 30px; }
.running::after {
  content: "";
  position: absolute;
  bottom: 1px;
  left: 21px;
  width: 8px;
  height: 4px;
  border-radius: 2px;
  background: #999;
}
.pinned .current { border: 1px solid #333; background: #2a2a2a; }
.current::after { left: 14px; bottom: 0; width: 20px; background: #976224; }
.profile-badge {
  position: absolute;
  top: 3px;
  right: 3px;
  width: 20px;
  height: 20px;
  border-radius: 50%;
  background: #0b84c6;
  color: #c8e4f5;
  font-size: 12px;
  line-height: 20px;
  font-weight: 600;
}
.tray { display: flex; align-items: center; justify-content: flex-end; gap: 20px; padding: 0 24px 2px 0; }
.system { gap: 9px; }
.clock { display: flex; flex-direction: column; align-items: flex-end; font-size: 15px; }
```
